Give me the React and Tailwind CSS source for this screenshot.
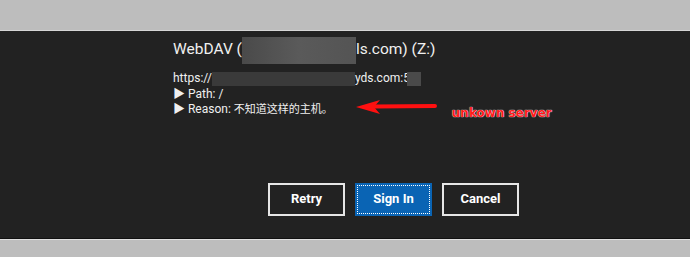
import React from 'react';

const Blur = ({ className }) => (
  <span className={`inline-block align-middle ${className}`} />
);

export default function App() {
  return (
    <div className="w-[690px] h-[257px] flex flex-col bg-[#bdbdbd] overflow-hidden" style={{ fontFamily: 'Roboto, "Noto Sans CJK SC", sans-serif' }}>
      <div className="h-[30px] shrink-0" />
      <div className="h-[1px] bg-[#d6d6d6]" />
      <div className="h-[207px] shrink-0 bg-[#222222] pl-[173px] pt-[5px] text-[#f0f0f0]">
        {/* title */}
        <div className="flex items-center h-[28px] text-[15.5px] leading-none">
          <span>WebDAV (</span>
          <Blur className="w-[114px] h-[27px] bg-gradient-to-r from-[#4a4a4a] via-[#5a5a5a] to-[#545454]" />
          <span>ls.com) (Z:)</span>
        </div>
        {/* details */}
        <div className="mt-[7px] text-[12px] leading-[15.5px]">
          <div className="flex items-center">
            <span>https://</span>
            <Blur className="w-[143px] h-[14px] bg-[#3a3a3a]" />
            <span>yds.com:5</span>
            <Blur className="w-[14px] h-[14px] bg-[#4a4a4a] -ml-[3px]" />
          </div>
          <div>▶ Path: /</div>
          <div className="flex items-start h-[15.5px]">
            <span>▶ Reason: <span className="text-[11px]">不知道这样的主机。</span></span>
            <svg width="82" height="16" viewBox="0 0 82 16" className="ml-[22px] -mt-[3px] shrink-0">
              <path d="M80 7 L20 7.5" stroke="#ff1010" strokeWidth="4" strokeLinecap="round" />
              <path d="M1 8 L25 1 L19 8 L25 15 Z" fill="#ff1010" />
            </svg>
            <span className="ml-[15px] mt-[4px] text-[12px] font-bold text-[#ff1a1a] whitespace-nowrap" style={{ fontFamily: '"DejaVu Sans", sans-serif', textShadow: '0 0 1px #fff, 0 0 1px #fff' }}>
              unkown server
            </span>
          </div>
        </div>
        {/* buttons */}
        <div className="flex gap-[10px] ml-[95px] mt-[65px] text-[13px] font-bold">
          <button className="w-[77px] h-[33px] border-2 border-[#e6e6e6] bg-[#222222] text-white">Retry</button>
          <button className="w-[77px] h-[33px] border-2 border-[#0a64b4] bg-[#0a64b4] text-white outline-1 outline-dotted outline-white -outline-offset-[3px]">Sign In</button>
          <button className="w-[77px] h-[33px] border-2 border-[#e6e6e6] bg-[#222222] text-white">Cancel</button>
        </div>
      </div>
      <div className="h-[1px] bg-[#111]" />
      <div className="h-[1px] bg-[#e0e0e0]" />
    </div>
  );
}
